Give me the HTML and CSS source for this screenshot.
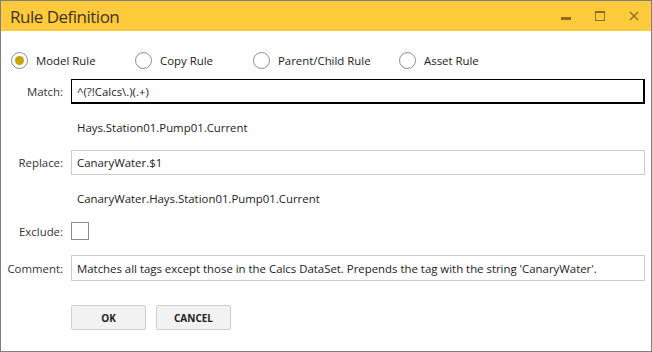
FILE: index.html
```html
<!DOCTYPE html>
<html lang="en">
<head>
  <meta charset="UTF-8">
  <title>Rule Definition</title>
  <link rel="stylesheet" href="styles.css">
</head>
<body>
  <div class="window">
    <div class="titlebar">
      <span class="title">Rule Definition</span>
      <div class="controls">
        <svg class="ctl" width="10" height="10" viewBox="0 0 10 10"><rect x="0" y="6" width="10" height="3" fill="#8a6d1e"/></svg>
        <svg class="ctl" width="10" height="10" viewBox="0 0 10 10"><rect x="0.5" y="0.5" width="9" height="9" fill="none" stroke="#8a6d1e"/><rect x="0" y="0" width="10" height="2" fill="#8a6d1e"/></svg>
        <svg class="ctl" width="10" height="10" viewBox="0 0 10 10"><path d="M1 1 L9 9 M9 1 L1 9" stroke="#8a6d1e" stroke-width="1.4"/></svg>
      </div>
    </div>

    <div class="content">
      <div class="radios">
        <label class="radio checked"><span class="dot"></span>Model Rule</label>
        <label class="radio copy"><span class="dot"></span>Copy Rule</label>
        <label class="radio parent"><span class="dot"></span>Parent/Child Rule</label>
        <label class="radio"><span class="dot"></span>Asset Rule</label>
      </div>

      <div class="form">
        <div class="row field">
          <span class="label">Match:</span>
          <div class="input focused">^(?!Calcs\.)(.+)</div>
        </div>
        <div class="row preview">
          <span class="label"></span>
          <span class="sample">Hays.Station01.Pump01.Current</span>
        </div>
        <div class="row field">
          <span class="label">Replace:</span>
          <div class="input">CanaryWater.$1</div>
        </div>
        <div class="row preview">
          <span class="label"></span>
          <span class="sample">CanaryWater.Hays.Station01.Pump01.Current</span>
        </div>
        <div class="row check-row">
          <span class="label">Exclude:</span>
          <span class="checkbox"></span>
        </div>
        <div class="row field comment">
          <span class="label">Comment:</span>
          <div class="input">Matches all tags except those in the Calcs DataSet. Prepends the tag with the string 'CanaryWater'.</div>
        </div>
        <div class="row buttons">
          <span class="label"></span>
          <button class="btn">OK</button>
          <button class="btn">CANCEL</button>
        </div>
      </div>
    </div>
  </div>
</body>
</html>
```

FILE: styles.css
```css
body {
  margin: 0;
  padding: 0;
  font-family: 'Open Sans', sans-serif;
  font-size: 11.4px;
  color: #222;
  background: #fff;
}

.window {
  width: 652px;
  height: 352px;
  box-sizing: border-box;
  border: 1px solid #7f7f7f;
  background: #fff;
}

.titlebar {
  height: 30px;
  background-color: #ffca3b;
  display: flex;
  align-items: center;
  justify-content: space-between;
  padding-left: 9px;
}

.title {
  font-size: 17px;
  color: #3d3520;
  letter-spacing: -0.5px;
}

.controls {
  display: flex;
  align-items: center;
  gap: 24px;
  padding-right: 12px;
}

.ctl {
  display: block;
}

.content {
  padding: 20px 6px 0 0;
}

/* Radio buttons */
.radios {
  display: flex;
  align-items: center;
  height: 18px;
  padding-left: 10px;
}

.radio {
  display: flex;
  align-items: center;
  gap: 8px;
  width: 124px;
}

.radio.copy {
  width: 118px;
}

.radio.parent {
  width: 146px;
}

.dot {
  width: 17px;
  height: 17px;
  box-sizing: border-box;
  border: 1px solid #8c8c8c;
  border-radius: 50%;
  display: flex;
  align-items: center;
  justify-content: center;
}

.radio.checked .dot::after {
  content: '';
  width: 9px;
  height: 9px;
  border-radius: 50%;
  background: #c9a400;
}

/* Form */
.form {
  margin-top: 10px;
  display: flex;
  flex-direction: column;
}

.row {
  display: flex;
  align-items: center;
  gap: 8px;
}

.label {
  width: 62px;
  flex: none;
  text-align: right;
  color: #333;
}

.field {
  height: 25px;
}

.input {
  flex: 1;
  height: 25px;
  box-sizing: border-box;
  border: 1px solid #cccccc;
  padding: 0 5px;
  display: flex;
  align-items: center;
  white-space: nowrap;
}

.input.focused {
  border: 1px solid #000;
  box-shadow: inset 0 -1px 0 #000, inset -1px 0 0 #000;
}

.preview {
  height: 46px;
}

.sample {
  padding-left: 6px;
}

.check-row {
  height: 20px;
}

.checkbox {
  width: 18px;
  height: 18px;
  box-sizing: border-box;
  border: 1px solid #8a8a8a;
}

.comment {
  margin-top: 14px;
  height: 26px;
}

.comment .input {
  height: 26px;
}

.buttons {
  margin-top: 24px;
  gap: 8px;
}

.btn {
  width: 75px;
  height: 25px;
  background: #f2f2f2;
  border: 1px solid #cfcfcf;
  border-radius: 2px;
  font-family: 'Open Sans', sans-serif;
  font-size: 10px;
  font-weight: 700;
  color: #222;
  padding: 0;
}

.buttons .btn + .btn {
  margin-left: 2px;
}
```
